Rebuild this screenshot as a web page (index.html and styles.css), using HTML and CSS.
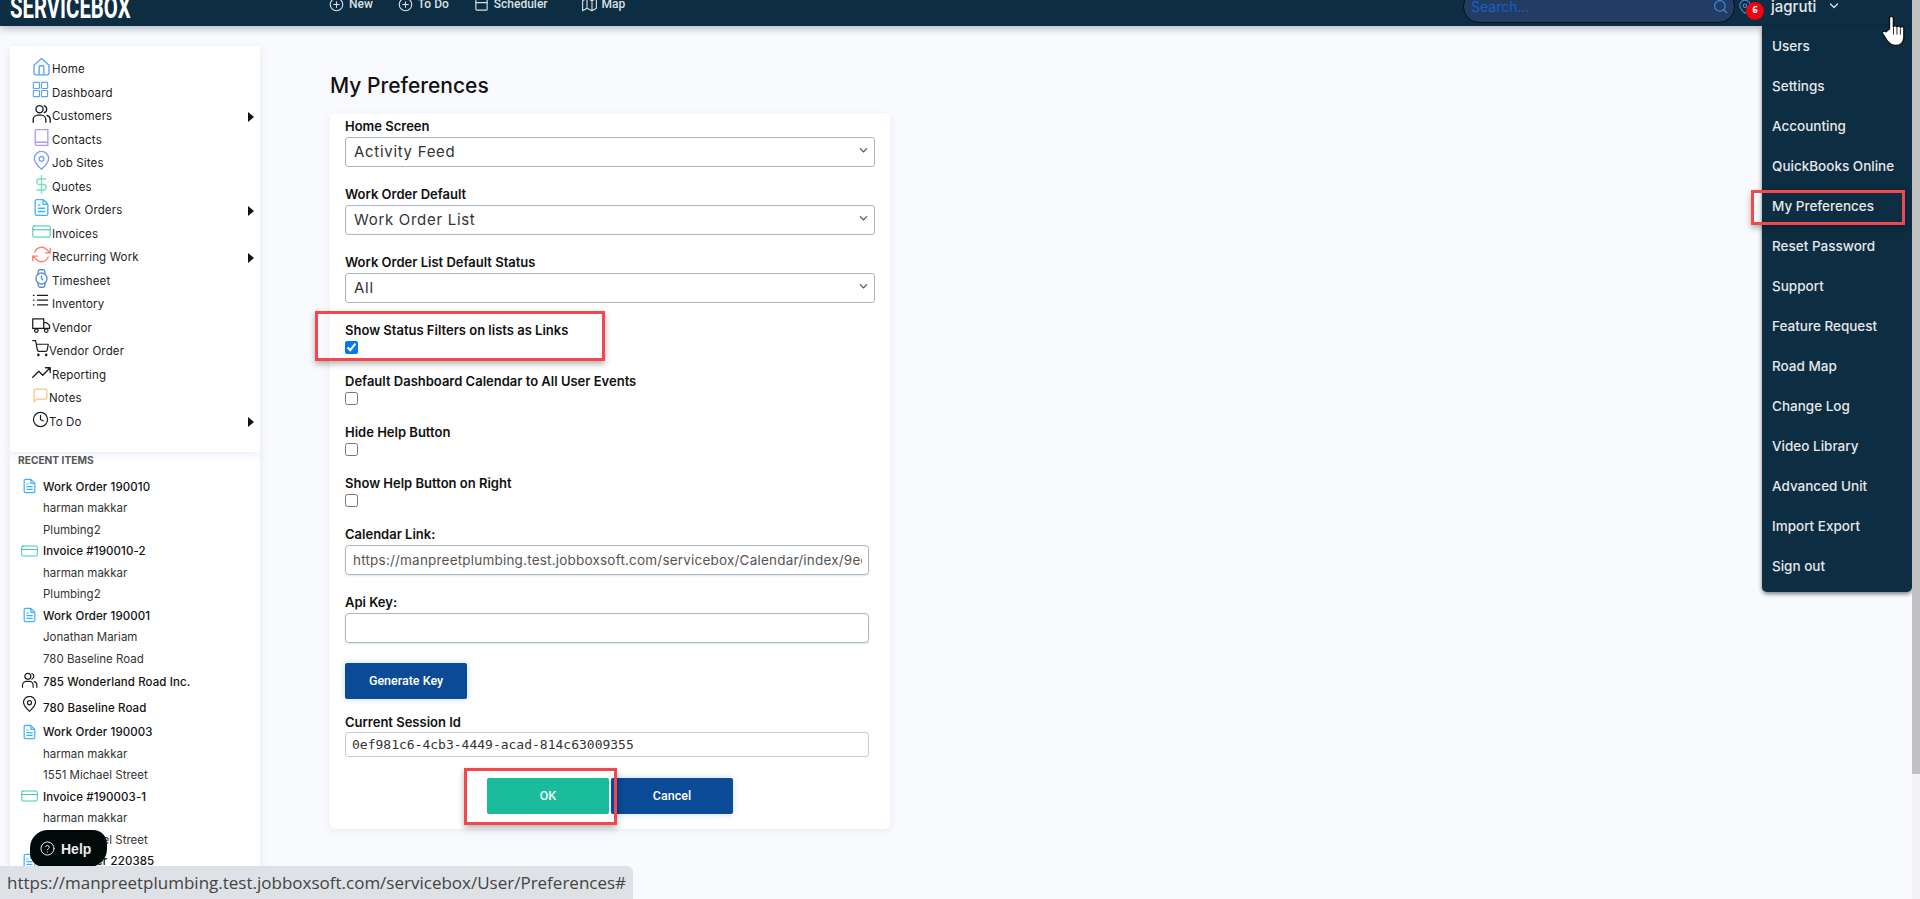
FILE: index.html
```html
<!DOCTYPE html>
<html lang="en">
<head>
<meta charset="utf-8">
<title>My Preferences</title>
<link rel="stylesheet" href="styles.css">
</head>
<body>
<svg class="sprite" width="0" height="0" aria-hidden="true">
  <symbol id="i-home" viewBox="0 0 24 24"><path d="M2.500 10.500 12 2l9.500 8.500V20a2.500 2.500 0 0 1-2.500 2.500H5A2.500 2.500 0 0 1 2.500 20z"/><path d="M9 22V12.500a1.500 1.500 0 0 1 1.500-1.500h3a1.500 1.500 0 0 1 1.500 1.500V22"/></symbol>
  <symbol id="i-grid" viewBox="0 0 28 28"><rect x="2" y="2" width="9" height="9" rx="1"/><rect x="14" y="2" width="9" height="9" rx="1"/><rect x="2" y="14" width="9" height="9" rx="1"/><rect x="14" y="14" width="9" height="9" rx="1"/></symbol>
  <symbol id="i-users" viewBox="0 0 24 24"><path d="M1.500 23v-3a6 6 0 0 1 6-6h4a6 6 0 0 1 6 6v3"/><circle cx="9.500" cy="6.500" r="4.500"/><path d="M19 14.500a5.500 5.500 0 0 1 4 5.500v3M15.500 2.300a4.500 4.500 0 0 1 0 8.500"/></symbol>
  <symbol id="i-book" viewBox="0 0 24 24"><path d="M4 20V4a2 2 0 0 1 2-2h14v20H6a2 2 0 0 1-2-2zM4 18h16"/></symbol>
  <symbol id="i-pin" viewBox="0 0 24 24"><path d="M12 23s9-8 9-13.500a9 9 0 0 0-18 0C3 15 12 23 12 23z"/><circle cx="12" cy="10" r="3"/></symbol>
  <symbol id="i-dollar" viewBox="0 0 24 24"><path d="M12 1v22M17 5H9.500a3.500 3.500 0 0 0 0 7h5a3.500 3.500 0 0 1 0 7H6"/></symbol>
  <symbol id="i-file" viewBox="0 0 24 24"><path d="M14 2H6a2 2 0 0 0-2 2v16a2 2 0 0 0 2 2h12a2 2 0 0 0 2-2V8zM14 2v6h6M8 13h8M8 17h8M8 9h2"/></symbol>
  <symbol id="i-card" viewBox="0 0 34 24"><rect x="1.500" y="2" width="31" height="20" rx="2"/><path d="M1.500 9h31"/></symbol>
  <symbol id="i-repeat" viewBox="0 0 24 24"><path d="M23 4v6h-6M1 20v-6h6M3.500 9a9 9 0 0 1 14.900-3.400L23 10M1 14l4.600 4.400A9 9 0 0 0 20.500 15"/></symbol>
  <symbol id="i-watch" viewBox="0 0 24 24"><circle cx="12" cy="12" r="7"/><path d="M12 9v3l1.500 1.500M16.500 17.300l-.4 3.900a2 2 0 0 1-2 1.800H9.900a2 2 0 0 1-2-1.800l-.4-3.900M7.500 6.700l.4-3.900a2 2 0 0 1 2-1.800h4.200a2 2 0 0 1 2 1.800l.4 3.900"/></symbol>
  <symbol id="i-list" viewBox="0 0 28 28"><path d="M8 5h15M8 12h15M8 19h15M2 5h1M2 12h1M2 19h1"/></symbol>
  <symbol id="i-truck" viewBox="0 0 26 24"><path d="M1 3h15v13H1zM16 8h4l4 4v4h-8z"/><circle cx="6" cy="19" r="2.500"/><circle cx="19.500" cy="19" r="2.500"/></symbol>
  <symbol id="i-cart" viewBox="0 0 24 24"><circle cx="9" cy="21" r="1"/><circle cx="20" cy="21" r="1"/><path d="M1 1h4l2.700 13.400a2 2 0 0 0 2 1.600h9.700a2 2 0 0 0 2-1.600L23 6H6"/></symbol>
  <symbol id="i-trend" viewBox="0 0 24 24"><path d="M23 6l-9.500 9.500-5-5L1 18M17 6h6v6"/></symbol>
  <symbol id="i-note" viewBox="0 0 24 24"><path d="M21 15a2 2 0 0 1-2 2H7l-4 4V5a2 2 0 0 1 2-2h14a2 2 0 0 1 2 2z"/></symbol>
  <symbol id="i-clock" viewBox="0 0 24 24"><circle cx="12" cy="12" r="10"/><path d="M12 6v6l4 2"/></symbol>
  <symbol id="i-plus" viewBox="0 0 24 24"><circle cx="12" cy="12" r="10"/><path d="M12 7.500v9M7.500 12h9"/></symbol>
  <symbol id="i-cal" viewBox="0 0 24 24"><rect x="3" y="3" width="18" height="18" rx="1.500"/><path d="M3 9h18"/></symbol>
  <symbol id="i-map" viewBox="0 0 24 24"><path d="M1 6v16l7-4 8 4 7-4V2l-7 4-8-4zM8 2v16M16 6v16"/></symbol>
  <symbol id="i-search" viewBox="0 0 24 24"><circle cx="11" cy="11" r="8.500"/><path d="M22 22l-4.800-4.800"/></symbol>
  <symbol id="i-chev" viewBox="0 0 24 24"><path d="M5 8l7 7 7-7"/></symbol>
  <symbol id="i-help" viewBox="0 0 24 24"><circle cx="12" cy="12" r="10.500"/><path d="M9 9a3 3 0 0 1 5.800 1c0 2-3 2.500-3 4.200M11.800 17.800h.1"/></symbol>
</svg>

<header class="topbar">
  <div class="logo"><span class="logo-text">SERVICEBOX</span></div>
  <nav class="topnav">
    <a class="topnav-item"><svg class="tn-ico"><use href="#i-plus"/></svg>New</a>
    <a class="topnav-item"><svg class="tn-ico"><use href="#i-plus"/></svg>To Do</a>
    <a class="topnav-item"><svg class="tn-ico"><use href="#i-cal"/></svg>Scheduler</a>
    <a class="topnav-item topnav-map"><svg class="tn-ico"><use href="#i-map"/></svg>Map</a>
  </nav>
  <div class="topright">
    <div class="search"><span class="search-text">Search...</span><svg class="search-ico"><use href="#i-search"/></svg></div>
    <div class="pin-wrap"><svg class="pin-ico"><use href="#i-pin"/></svg><span class="badge">6</span></div>
    <span class="user">jagruti</span>
    <svg class="user-chev"><use href="#i-chev"/></svg>
  </div>
</header>

<div class="layout">
  <aside class="sidebar">
    <div class="card menu">
      <a class="mi"><svg class="ic c-blue"><use href="#i-home"/></svg>Home</a>
      <a class="mi"><svg class="ic c-blue"><use href="#i-grid"/></svg>Dashboard</a>
      <a class="mi arrow"><svg class="ic c-dark"><use href="#i-users"/></svg>Customers</a>
      <a class="mi"><svg class="ic c-purple"><use href="#i-book"/></svg>Contacts</a>
      <a class="mi"><svg class="ic c-peri"><use href="#i-pin"/></svg>Job Sites</a>
      <a class="mi"><svg class="ic c-mint"><use href="#i-dollar"/></svg>Quotes</a>
      <a class="mi arrow"><svg class="ic c-sky"><use href="#i-file"/></svg>Work Orders</a>
      <a class="mi"><svg class="ic c-teal"><use href="#i-card"/></svg>Invoices</a>
      <a class="mi arrow"><svg class="ic c-coral"><use href="#i-repeat"/></svg>Recurring Work</a>
      <a class="mi"><svg class="ic c-steel"><use href="#i-watch"/></svg>Timesheet</a>
      <a class="mi"><svg class="ic c-dark"><use href="#i-list"/></svg>Inventory</a>
      <a class="mi"><svg class="ic c-dark"><use href="#i-truck"/></svg>Vendor</a>
      <a class="mi narrow"><svg class="ic c-dark"><use href="#i-cart"/></svg>Vendor Order</a>
      <a class="mi"><svg class="ic c-dark"><use href="#i-trend"/></svg>Reporting</a>
      <a class="mi narrow"><svg class="ic c-amber"><use href="#i-note"/></svg>Notes</a>
      <a class="mi narrow arrow"><svg class="ic c-dark"><use href="#i-clock"/></svg>To Do</a>
    </div>
    <div class="recent">
      <div class="recent-title">RECENT ITEMS</div>
      <div class="ri head"><svg class="ri-ic c-sky"><use href="#i-file"/></svg>Work Order 190010</div>
      <div class="ri">harman makkar</div>
      <div class="ri">Plumbing2</div>
      <div class="ri head"><svg class="ri-ic c-teal"><use href="#i-card"/></svg>Invoice #190010-2</div>
      <div class="ri">harman makkar</div>
      <div class="ri">Plumbing2</div>
      <div class="ri head"><svg class="ri-ic c-sky"><use href="#i-file"/></svg>Work Order 190001</div>
      <div class="ri">Jonathan Mariam</div>
      <div class="ri">780 Baseline Road</div>
      <div class="ri head tall"><svg class="ri-ic c-dark"><use href="#i-users"/></svg>785 Wonderland Road Inc.</div>
      <div class="ri head taller"><svg class="ri-ic c-dark"><use href="#i-pin"/></svg>780 Baseline Road</div>
      <div class="ri head"><svg class="ri-ic c-sky"><use href="#i-file"/></svg>Work Order 190003</div>
      <div class="ri">harman makkar</div>
      <div class="ri">1551 Michael Street</div>
      <div class="ri head"><svg class="ri-ic c-teal"><use href="#i-card"/></svg>Invoice #190003-1</div>
      <div class="ri">harman makkar</div>
      <div class="ri">1551 Michael Street</div>
      <div class="ri head"><svg class="ri-ic c-sky"><use href="#i-file"/></svg>Work Order 220385</div>
    </div>
  </aside>

  <main class="main">
    <h1 class="title">My Preferences</h1>
    <form class="form-card">
      <div class="field">
        <label class="lbl">Home Screen</label>
        <div class="sel-wrap"><select class="ctl sel"><option>Activity Feed</option></select><svg class="sel-chev"><use href="#i-chev"/></svg></div>
      </div>
      <div class="field">
        <label class="lbl">Work Order Default</label>
        <div class="sel-wrap"><select class="ctl sel"><option>Work Order List</option></select><svg class="sel-chev"><use href="#i-chev"/></svg></div>
      </div>
      <div class="field">
        <label class="lbl">Work Order List Default Status</label>
        <div class="sel-wrap"><select class="ctl sel"><option>All</option></select><svg class="sel-chev"><use href="#i-chev"/></svg></div>
      </div>
      <div class="field">
        <label class="lbl">Show Status Filters on lists as Links</label>
        <input class="chk" type="checkbox" checked>
      </div>
      <div class="field">
        <label class="lbl">Default Dashboard Calendar to All User Events</label>
        <input class="chk" type="checkbox">
      </div>
      <div class="field">
        <label class="lbl">Hide Help Button</label>
        <input class="chk" type="checkbox">
      </div>
      <div class="field">
        <label class="lbl">Show Help Button on Right</label>
        <input class="chk" type="checkbox">
      </div>
      <div class="field">
        <label class="lbl">Calendar Link:</label>
        <input class="ctl txt" type="text" value="https://manpreetplumbing.test.jobboxsoft.com/servicebox/Calendar/index/9eea1c3b7d41">
      </div>
      <div class="field">
        <label class="lbl">Api Key:</label>
        <input class="ctl txt" type="text">
      </div>
      <button class="btn btn-blue btn-gen" type="button">Generate Key</button>
      <div class="field field-session">
        <label class="lbl">Current Session Id</label>
        <input class="ctl session" type="text" value="0ef981c6-4cb3-4449-acad-814c63009355">
      </div>
      <div class="actions">
        <button class="btn btn-green" type="button">OK</button>
        <button class="btn btn-blue" type="button">Cancel</button>
      </div>
    </form>
  </main>
</div>

<div class="dropdown">
  <a class="dd">Users</a>
  <a class="dd">Settings</a>
  <a class="dd">Accounting</a>
  <a class="dd">QuickBooks Online</a>
  <a class="dd">My Preferences</a>
  <a class="dd">Reset Password</a>
  <a class="dd">Support</a>
  <a class="dd">Feature Request</a>
  <a class="dd">Road Map</a>
  <a class="dd">Change Log</a>
  <a class="dd">Video Library</a>
  <a class="dd">Advanced Unit</a>
  <a class="dd">Import Export</a>
  <a class="dd">Sign out</a>
</div>

<div class="mark mark-pref"></div>
<div class="mark mark-status"></div>
<div class="mark mark-ok"></div>

<svg class="hand" viewBox="1.500 0 20 29" preserveAspectRatio="none"><path d="M8 13V3a1.700 1.700 0 0 1 3.400 0v8l.1 0a1.600 1.600 0 0 1 3 .3 1.600 1.600 0 0 1 3 .3 1.600 1.600 0 0 1 3 .6V21c0 4-2.500 7.500-7 7.500-4 0-5.500-1.500-7.500-4.500L2 17.500c-1-1.700 1.500-3.300 3-1.800z"/><path class="hand-line" d="M11.500 12v6M14.500 12.500V18M17.500 13v5"/></svg>

<div class="scroll-track"><div class="scroll-thumb"></div></div>

<button class="help" type="button"><svg class="help-ico"><use href="#i-help"/></svg>Help</button>
<div class="status">https://manpreetplumbing.test.jobboxsoft.com/servicebox/User/Preferences#</div>
</body>
</html>
```
FILE: styles.css
```css
* { box-sizing: border-box; }
html, body { margin: 0; height: 899px; overflow: hidden; }
body { background: #f9fafd; font-family: Inter, "Open Sans", sans-serif; color: #222; position: relative; }
.sprite { position: absolute; }
svg { fill: none; stroke: currentColor; stroke-width: 2; stroke-linecap: round; stroke-linejoin: round; flex: none; }

/* top bar */
.topbar { height: 26px; background: #0c2d42; display: flex; align-items: flex-start; padding: 0 80px 0 10px; box-shadow: 0 2px 8px rgba(20, 50, 70, .35); position: relative; color: #e2e6e9; overflow: hidden; }
.logo { width: 120px; height: 26px; margin-top: -9px; flex: none; }
.logo-text { display: block; font: 700 32px/32px Roboto, sans-serif; color: #fff; transform: scaleX(.636); transform-origin: left top; white-space: nowrap; }
.topnav { display: flex; gap: 25px; margin: -4px 0 0 199px; }
.topnav-item { display: flex; align-items: center; gap: 5px; font: 500 12px/16px Roboto, sans-serif; color: #dbe0e4; }
.topnav-map { margin-left: 9px; }
.tn-ico { width: 15px; height: 15px; stroke-width: 1.800; }
.topright { margin-left: auto; display: flex; align-items: flex-start; }
.search { width: 272px; height: 33px; margin-top: -10px; background: #233c63; border: 1px solid #04121c; border-radius: 16px; display: flex; align-items: center; justify-content: space-between; padding: 0 6px 0 7px; }
.search-text { font-size: 14px; color: #1a5fc4; }
.search-ico { width: 15px; height: 15px; color: #3b8fe0; stroke-width: 1.800; }
.pin-wrap { width: 33px; height: 26px; margin-left: 3px; position: relative; }
.pin-ico { width: 14px; height: 18px; color: #4f8fd8; margin-top: -6px; stroke-width: 1.800; }
.badge { position: absolute; left: 8px; top: 2px; width: 18px; height: 18px; border-radius: 50%; background: #f5000f; color: #fff; font: 700 8px/18px "DejaVu Sans", sans-serif; text-align: center; }
.user { font-size: 15px; font-weight: 500; line-height: 14px; color: #e6e8ea; width: 55px; white-space: nowrap; }
.user-chev { width: 12px; height: 12px; margin: 0 0 0 2px; color: #e6e8ea; stroke-width: 2.400; }

/* page layout */
.layout { display: flex; align-items: flex-start; }
.sidebar { width: 250px; margin: 20px 0 0 10px; flex: none; }
.card { background: #fff; box-shadow: 0 2px 8px rgba(120, 130, 190, .16); }
.menu { height: 406px; padding: 11.500px 0 0 22px; border-radius: 2px; position: relative; }
.mi { height: 23.500px; display: flex; align-items: center; font-size: 11.500px; letter-spacing: .15px; line-height: 14px; color: #222; position: relative; }
.ic { width: 19px; height: 19px; margin: -5px 1px 0 0; stroke-width: 1.700; }
.narrow .ic { width: 17px; height: 17px; margin-right: 0; }
.arrow::after { content: ""; position: absolute; left: 216px; top: 7px; border-left: 6px solid #111; border-top: 5px solid transparent; border-bottom: 5px solid transparent; }
.c-blue { color: #5da2f2; }
.c-dark { color: #1c1c22; }
.c-purple { color: #a99ff0; }
.c-peri { color: #7da0f5; }
.c-mint { color: #7fdcc0; }
.c-sky { color: #3db2ff; }
.c-teal { color: #2fc4a0; }
.c-coral { color: #ff7f6a; }
.c-steel { color: #5b8fc0; }
.c-amber { color: #ffc27a; }

.recent { background: #fff; height: 447px; box-shadow: 0 2px 8px rgba(120, 130, 190, .16); padding: 1px 0 0 8px; }
.recent-title { font-size: 10.200px; font-weight: 700; line-height: 14px; color: #555; margin-bottom: 9px; }
.ri { height: 21.500px; display: flex; align-items: center; padding-left: 25px; font-size: 11.500px; color: #333; position: relative; white-space: nowrap; }
.ri.head { font-weight: 500; letter-spacing: .1px; color: #111; }
.ri.tall { height: 24px; }
.ri.taller { height: 28px; }
.ri-ic { position: absolute; left: 3px; top: 2px; width: 17px; height: 16px; stroke-width: 1.800; }

/* main form */
.main { margin-left: 70px; width: 560px; flex: none; }
.title { margin: 0; padding-top: 45px; height: 88px; font-size: 21px; line-height: 30px; font-weight: 500; color: #111; }
.form-card { background: #fff; width: 560px; height: 715px; padding: 3px 15px 15px; border-radius: 2px 2px 6px 6px; box-shadow: 0 2px 8px rgba(120, 130, 190, .10); }
.field { margin-bottom: 18px; }
.lbl { display: block; height: 18px; margin-bottom: 2px; font-size: 13px; line-height: 18px; font-weight: 600; color: #111; white-space: nowrap; }
.ctl { display: block; font-family: inherit; color: #333; background: #fff; outline: none; }
.sel-wrap { position: relative; width: 530px; }
.sel { width: 530px; height: 30px; border: 1px solid #a9b8c3; border-radius: 3px; padding: 0 8px 2px; font-size: 15px; letter-spacing: .7px; appearance: none; }
.sel-chev { position: absolute; right: 6px; top: 8px; width: 11px; height: 11px; color: #444; stroke-width: 2.400; }
.txt { width: 524px; height: 30px; border: 1px solid #a9b8c3; border-radius: 4px; padding: 0 6px 0 7px; font-size: 13.500px; letter-spacing: .2px; box-shadow: 0 1px 2px rgba(120, 150, 170, .25); color: #555; }
.chk { display: block; width: 13px; height: 13px; margin: 0; accent-color: #0b76ef; }
.btn { display: block; width: 122px; height: 36px; border: 0; border-radius: 2px; font: 500 12.500px/36px Roboto, sans-serif; color: #fff; padding: 0; }
.btn-blue { background: #0a4a96; box-shadow: 0 0 6px rgba(70, 160, 230, .35); }
.btn-green { background: #1abc9c; color: #eafff8; }
.btn-gen { margin: 20px 0 14px; }
.field-session { margin-bottom: 21px; }
.field-session .lbl { margin-bottom: 1px; }
.session { width: 524px; height: 25px; border: 1px solid #ccc; border-radius: 3px; padding: 0 6px; font: 13px "DejaVu Sans Mono", monospace; color: #333; }
.actions { display: flex; justify-content: center; gap: 2px; }

/* overlays */
.dropdown { position: absolute; left: 1762px; top: 26px; width: 150px; height: 566px; background: #0c2d42; border-radius: 0 0 5px 5px; box-shadow: 0 2px 4px rgba(0, 0, 0, .5); padding-top: 1px; }
.dd { display: block; height: 40px; line-height: 39px; padding-left: 10px; font-size: 13.500px; font-weight: 500; color: #e6e8ea; white-space: nowrap; }
.mark { position: absolute; border: 3px solid #f2484d; box-shadow: 0 3px 6px rgba(0, 0, 0, .3); }
.mark-pref { left: 1751px; top: 190px; width: 154px; height: 35px; }
.mark-status { left: 315px; top: 311px; width: 290px; height: 50px; }
.mark-ok { left: 464px; top: 768px; width: 153px; height: 57px; }
.hand { position: absolute; left: 1882px; top: 15px; width: 23px; height: 31px; fill: #fff; stroke: #111; stroke-width: 1.200; }
.hand-line { fill: none; stroke-width: .8; }
.scroll-track { position: absolute; right: 0; top: 0; width: 8px; height: 899px; background: #f4f4f4; }
.scroll-thumb { width: 100%; height: 774px; background: #c1c1c1; }
.help { position: absolute; left: 30px; top: 830px; width: 77px; height: 37px; border: 0; padding: 0 0 0 10px; border-radius: 18px 14px 18px 14px; background: #000a08; color: #e8ecec; font: 700 14px "Liberation Sans", sans-serif; display: flex; align-items: center; gap: 6px; }
.help-ico { width: 15px; height: 15px; stroke-width: 1.600; }
.status { position: absolute; left: 0; bottom: 0; width: 633px; height: 33px; background: #dee1e6; border-radius: 0 6px 0 0; padding-left: 7px; font: 17px/33px "Open Sans", sans-serif; color: #444; white-space: nowrap; overflow: hidden; }
```
